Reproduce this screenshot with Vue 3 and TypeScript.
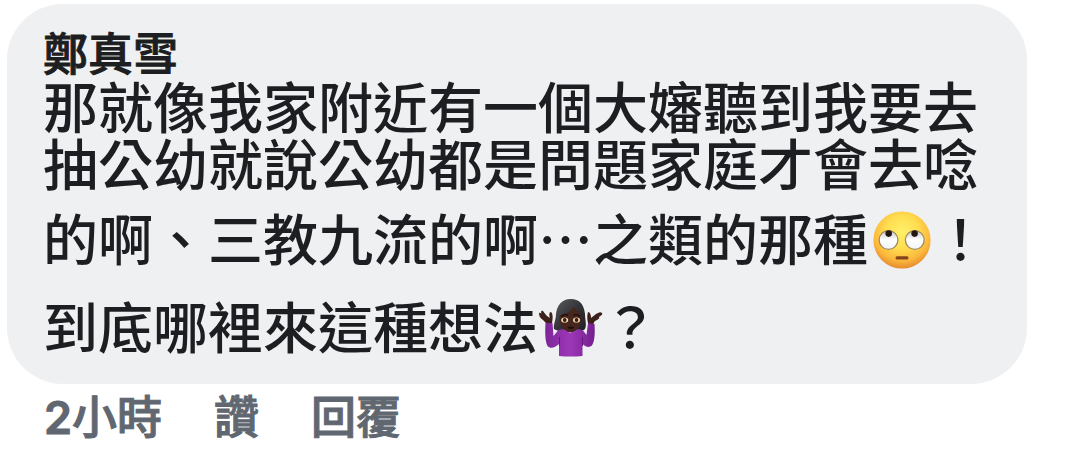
<script setup lang="ts">
interface Comment {
  author: string
  opening: string[]
  remark: string
  question: string
  time: string
}

const comment: Comment = {
  author: '鄭真雪',
  opening: ['那就像我家附近有一個大嬸聽到我要去', '抽公幼就說公幼都是問題家庭才會去唸'],
  remark: '的啊、三教九流的啊…之類的那種',
  question: '到底哪裡來這種想法',
  time: '小時',
}
</script>

<template>
  <article class="comment">
    <div class="bubble">
      <h1 class="author">{{ comment.author }}</h1>
      <p class="line opening">{{ comment.opening.join('\n') }}</p>
      <p class="line tall">
        {{ comment.remark }}<svg class="emoji" viewBox="0 0 65 60" role="img" aria-label="🙄">
          <defs>
            <radialGradient id="face" cx="50%" cy="36%" r="64%">
              <stop offset="0" stop-color="#fff06a" />
              <stop offset=".45" stop-color="#ffdd50" />
              <stop offset=".78" stop-color="#fcb83c" />
              <stop offset="1" stop-color="#e58a30" />
            </radialGradient>
            <linearGradient id="eye" x1="0" y1="0" x2="0" y2="1">
              <stop offset="0" stop-color="#c9c6c6" />
              <stop offset=".5" stop-color="#ffffff" />
              <stop offset="1" stop-color="#f1f4fa" />
            </linearGradient>
          </defs>
          <circle cx="34" cy="30" r="28.6" fill="url(#face)" />
          <circle cx="20.5" cy="30" r="9.4" fill="url(#eye)" stroke="#a08a58" stroke-width="1.3" />
          <circle cx="46.8" cy="30" r="9.4" fill="url(#eye)" stroke="#a08a58" stroke-width="1.3" />
          <circle cx="20.7" cy="23.6" r="3.3" fill="#231715" />
          <circle cx="46.6" cy="23.6" r="3.3" fill="#231715" />
          <rect x="27.5" y="46.3" width="13" height="3.2" rx="1.6" fill="#85451c" />
        </svg>！
      </p>
      <p class="line tall">
        {{ comment.question }}<svg class="emoji" viewBox="0 0 65 60" role="img" aria-label="🤷🏿‍♀️">
          <defs>
            <linearGradient id="shirt" x1="0" y1="0" x2="1" y2="0">
              <stop offset="0" stop-color="#7d2499" />
              <stop offset=".5" stop-color="#9d38b8" />
              <stop offset="1" stop-color="#74208e" />
            </linearGradient>
            <linearGradient id="hair" x1="0" y1="0" x2="1" y2="1">
              <stop offset="0" stop-color="#5c5c60" />
              <stop offset=".5" stop-color="#343438" />
              <stop offset="1" stop-color="#202024" />
            </linearGradient>
          </defs>
          <path d="M33 1C23 1 19 8 18 16C18 22 15 27 16 31C21 34 28 34 32 34C38 34 44 34 47 31C49 27 47 22 47 16C46 6 41 1 33 1Z" fill="url(#hair)" />
          <path d="M7.500 25Q11 23.500 14.500 25L15.500 38L20 32.500C23 30.500 27 31 28 32Q32 37 36 32C38 31 42 30.500 45 32.500L48.500 37L50 25Q53 23.500 56.500 26C57 34 57 43 54 47.500C51 50 48 49 44.500 46V58Q33 59 21 58V46C17 50 12 51 9.500 48C7 43 7 34 7.500 25Z" fill="url(#shirt)" />
          <path d="M21.500 48V39M44.500 48V39" fill="none" stroke="#64187d" stroke-width="1" />
          <path d="M22 17C28 16 33 13 36 9C38 12 42 14 43 18C44 27 39 34 33 34C26 34 20 26 22 17Z" fill="#46261d" />
          <path d="M23.500 18.500Q26.500 15.500 30 17.500M35.500 17.500Q39 15.500 42 18.500" fill="none" stroke="#170f0e" stroke-width="1.2" />
          <ellipse cx="26.700" cy="22" rx="3.500" ry="2.600" fill="#f3dfb5" />
          <ellipse cx="38.500" cy="22" rx="3.500" ry="2.600" fill="#f3dfb5" />
          <circle cx="26.700" cy="22" r="1.900" fill="#3b1a10" />
          <circle cx="38.500" cy="22" r="1.900" fill="#3b1a10" />
          <path d="M29 29.500Q32.700 27.500 36.500 29.500Q32.700 32.500 29 29.500Z" fill="#1e100f" />
          <path d="M8 25L5 22C2 20 1 18 1 15C2 14 4 16 5 18C2 15 3 12 5 13C6 14 7 16 9 18L12 20C11 17 11 14 13 14C15 16 15 20 14 25Z" fill="#3b2119" />
          <path d="M50 25C49 21 49 17 50 14C52 14 53 17 53 20L58 16C60 15 62 13 64 15C65 16 63 18 61 19C62 20 60 22 57 23L55 26Z" fill="#3b2119" />
        </svg>？
      </p>
    </div>
    <footer class="actions">
      <a class="action" href="#comment"><span class="count">2</span>{{ comment.time }}</a>
      <button class="action" type="button">讚</button>
      <button class="action" type="button">回覆</button>
    </footer>
  </article>
</template>

<style>
body {
  margin: 0;
  background: #fff;
}
</style>

<style scoped>
.comment {
  padding: 4px 47px 0 7px;
  font-family: "Noto Sans CJK TC", sans-serif;
  color: #1c1e21;
}

.bubble {
  padding: 24px 35px 16px 36px;
  border-radius: 56px;
  background: #eff0f2;
}

.author,
.line {
  margin: 0;
  font-weight: 500;
}

.author {
  font-size: 45px;
  line-height: 48px;
  -webkit-text-stroke: 1px currentColor;
}

.line {
  font-size: 55px;
  line-height: 57px;
  white-space: nowrap;
}

.opening {
  margin-bottom: 2px;
  white-space: pre;
}

.tall {
  line-height: 88px;
}

.emoji {
  width: 65px;
  height: 60px;
  vertical-align: -10px;
}

.actions {
  display: flex;
  align-items: baseline;
  gap: 52px;
  padding: 5px 37px;
}

.action {
  padding: 0;
  border: 0;
  background: none;
  font: inherit;
  font-size: 45px;
  font-weight: 500;
  line-height: 52px;
  color: #616770;
  text-decoration: none;
  -webkit-text-stroke: 1px currentColor;
}

.count {
  font-family: Inter, sans-serif;
  font-weight: 600;
}
</style>
